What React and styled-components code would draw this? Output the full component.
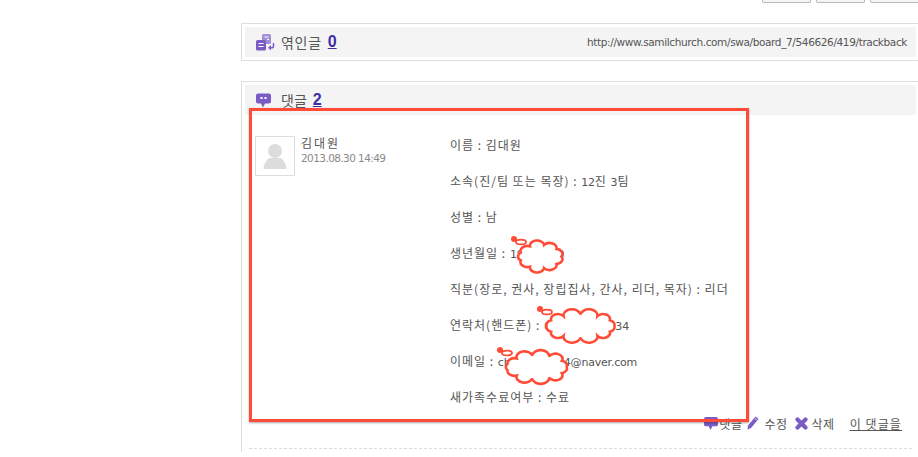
import React from "react";
import styled, { createGlobalStyle } from "styled-components";

const GlobalStyle = createGlobalStyle`
  html, body {
    margin: 0;
    padding: 0;
    background: #fff;
  }
  body {
    font-family: "Noto Sans CJK KR", "Liberation Sans", sans-serif;
  }
`;

const Page = styled.div`
  position: relative;
  width: 918px;
  height: 457px;
  overflow: hidden;
  padding-left: 241px;
  box-sizing: border-box;
`;

const TopButtons = styled.div`
  display: flex;
  justify-content: flex-end;
  gap: 5px;
  height: 3px;
  margin-right: -1px;
`;

const TopButton = styled.div`
  width: 49px;
  height: 3px;
  box-sizing: border-box;
  border: 1px solid #b9b9b9;
  border-top: 0;
  border-radius: 0 0 2px 2px;
  background: #f4f4f4;
`;

const Panel = styled.section`
  margin-top: 20px;
  border: 1px solid #dedede;
  border-right: 0;
  border-bottom: ${(p) => (p.$open ? "0" : "1px solid #dedede")};
  padding: 3px 2px 3px 3px;
`;

const PanelHead = styled.div`
  display: flex;
  align-items: center;
  height: 30px;
  padding: 0 9px 0 11px;
  background: #f4f4f4;
  color: #555;
  font-size: 14px;
`;

const HeadTitle = styled.span`
  letter-spacing: ${(p) => p.$spacing || 0}px;
`;

const HeadIcon = styled.svg`
  flex: none;
  width: ${(p) => p.$w}px;
  height: 17px;
  margin-right: ${(p) => p.$gap}px;
`;

const Count = styled.a`
  margin-left: 6px;
  color: #3c2fa6;
  font: bold 16px "Liberation Sans", sans-serif;
  text-decoration: underline;
`;

const TrackUrl = styled.span`
  margin-left: auto;
  color: #555;
  font: 10.5px "DejaVu Sans", sans-serif;
  letter-spacing: -0.37px;
`;

const Comment = styled.div`
  display: flex;
  padding: 21px 0 0 10px;
  height: 278px;
`;

const Avatar = styled.div`
  flex: none;
  width: 38px;
  height: 38px;
  border: 1px solid #ddd;
  display: flex;
  align-items: flex-end;
  justify-content: center;
`;

const Author = styled.div`
  flex: none;
  width: 155px;
  padding-left: 6px;
  box-sizing: border-box;
  margin-top: -1px;
`;

const AuthorName = styled.div`
  color: #555;
  font-size: 12px;
  line-height: 15px;
  letter-spacing: 1.9px;
`;

const AuthorDate = styled.div`
  margin-top: 1px;
  color: #888;
  font: 10.5px/15px "DejaVu Sans", sans-serif;
  letter-spacing: -0.58px;
`;

const Body = styled.div`
  display: flex;
  flex-direction: column;
  gap: 18px;
  color: #555;
  font-size: 12px;
  letter-spacing: 1px;
`;

const Line = styled.div`
  height: 18px;
  line-height: 18px;
  white-space: nowrap;
`;

const Latin = styled.span`
  font-family: "DejaVu Sans", sans-serif;
  font-size: 11px;
  letter-spacing: -0.2px;
  line-height: 1;
`;

const Actions = styled.div`
  display: flex;
  align-items: center;
  justify-content: flex-end;
  height: 18px;
  padding-right: 14px;
  color: #555;
  font-size: 12px;
  letter-spacing: 0.5px;
`;

const Action = styled.span`
  display: inline-flex;
  align-items: center;
  gap: ${(p) => p.$inner}px;
  margin-right: ${(p) => p.$gap}px;
`;

const ActionLink = styled.a`
  color: #555;
  text-decoration: underline;
  letter-spacing: 1.1px;
`;

const Divider = styled.div`
  margin: 16px 4px 0 4px;
  border-top: 1px dashed #ddd;
`;

const Highlight = styled.div`
  position: absolute;
  left: 249px;
  top: 108px;
  width: 500px;
  height: 314px;
  box-sizing: border-box;
  border: 3px solid #ff4b37;
  box-shadow: 0 1px 2px rgba(0, 0, 0, 0.35);
`;

const CloudMark = styled.svg`
  position: absolute;
  left: ${(p) => p.$x}px;
  top: ${(p) => p.$y}px;
  overflow: visible;
`;

// scalloped outline around an ellipse, for the hand-drawn redaction clouds
const cloudPath = (w, h, bumps) => {
  const pts = [];
  for (let i = 0; i < bumps; i++) {
    const a = (i / bumps) * Math.PI * 2;
    pts.push([w / 2 + (Math.cos(a) * w) / 2.15, h / 2 + (Math.sin(a) * h) / 2.8]);
  }
  let d = `M${pts[0][0].toFixed(1)} ${pts[0][1].toFixed(1)}`;
  for (let i = 1; i <= bumps; i++) {
    const p = pts[i % bumps];
    d += ` A7 5 0 0 1 ${p[0].toFixed(1)} ${p[1].toFixed(1)}`;
  }
  return d + "Z";
};

const Cloud = ({ x, y, w, h, bumps }) => (
  <CloudMark $x={x} $y={y} width={w} height={h}>
    <ellipse cx="3" cy="2" rx="5" ry="2.4" fill="#fff" stroke="#ff4b37" strokeWidth="1.8" />
    <circle cx="-4" cy="-1" r="3" fill="#ff4b37" />
    <path d={cloudPath(w, h, bumps)} fill="#fff" stroke="#ff4b37" strokeWidth="2.6" />
  </CloudMark>
);

const TrackbackIcon = () => (
  <HeadIcon $w={19} $gap={6} viewBox="0 0 19 17">
    <rect x="6" y="0" width="9" height="10" rx="1.5" fill="#a28fdb" />
    <rect x="0" y="6" width="10" height="10.500" rx="1.5" fill="#7a5cc4" />
    <path d="M2.500 9.500h5M2.500 12.500h5M8.500 3h4M11 5.500h2" stroke="#fff" strokeWidth="1" />
    <path d="M17.500 9v3a1.800 1.800 0 0 1-1.800 1.800H14" fill="none" stroke="#7a5cc4" strokeWidth="1.500" />
    <path d="M15 11l-3 2.800 3 2.800z" fill="#7a5cc4" />
  </HeadIcon>
);

const bubbleShape = (
  <>
    <path d="M2 0h11a2 2 0 0 1 2 2v6a2 2 0 0 1-2 2H9l-2 4-2-4H2a2 2 0 0 1-2-2V2a2 2 0 0 1 2-2z" fill="#7a5cc4" />
    <rect x="4.500" y="3.500" width="2" height="2" fill="#fff" />
    <rect x="8.500" y="3.500" width="2" height="2" fill="#fff" />
  </>
);

const PencilIcon = () => (
  <svg width="12" height="14" viewBox="0 0 12 14">
    <path d="M8.500 0.500l3 2.500-7.500 9L0.500 13.500l0.500-4z" fill="#7a5cc4" />
    <path d="M7.500 2l3 2.500" stroke="#d5ccf0" strokeWidth="1" />
  </svg>
);

const CrossIcon = () => (
  <svg width="13" height="13" viewBox="0 0 13 13">
    <path d="M2.500 2.500l8 8M10.500 2.500l-8 8" stroke="#7a5cc4" strokeWidth="4.200" strokeLinecap="round" />
  </svg>
);

const AvatarFigure = () => (
  <svg width="24" height="33" viewBox="0 0 24 33">
    <circle cx="12" cy="9" r="7" fill="#dcdcdc" />
    <path d="M0.500 27c0-5 3-9 6-11h11c3 2 6 6 6 11z" fill="#dcdcdc" />
  </svg>
);

const App = () => {
  return (
    <>
      <GlobalStyle />
      <Page>
        <TopButtons>
          <TopButton />
          <TopButton />
          <TopButton />
        </TopButtons>

        <Panel>
          <PanelHead>
            <TrackbackIcon />
            <HeadTitle $spacing={0.7}>엮인글</HeadTitle>
            <Count href="#">0</Count>
            <TrackUrl>http://www.samilchurch.com/swa/board_7/546626/419/trackback</TrackUrl>
          </PanelHead>
        </Panel>

        <Panel $open>
          <PanelHead>
            <HeadIcon $w={15} $gap={10} viewBox="0 0 15 14">
              {bubbleShape}
            </HeadIcon>
            <HeadTitle>댓글</HeadTitle>
            <Count href="#">2</Count>
          </PanelHead>

          <Comment>
            <Avatar>
              <AvatarFigure />
            </Avatar>
            <Author>
              <AuthorName>김대원</AuthorName>
              <AuthorDate>2013.08.30 14:49</AuthorDate>
            </Author>
            <Body>
              <Line>이름 : 김대원</Line>
              <Line>소속(진/팀 또는 목장) : <Latin>12</Latin>진 <Latin>3</Latin>팀</Line>
              <Line>성별 : 남</Line>
              <Line>생년월일 : <Latin>19000000</Latin></Line>
              <Line>직분(장로, 권사, 장립집사, 간사, 리더, 목자) : 리더</Line>
              <Line>연락처(핸드폰) : <Latin>00000.0000034</Latin></Line>
              <Line>이메일 : <Latin>chxxxxxxxxi4@naver.com</Latin></Line>
              <Line>새가족수료여부 : 수료</Line>
            </Body>
          </Comment>

          <Actions>
            <Action $gap={5} $inner={1}>
              <svg width="14" height="13" viewBox="0 0 15 14">{bubbleShape}</svg>
              댓글
            </Action>
            <Action $gap={7} $inner={5}><PencilIcon />수정</Action>
            <Action $gap={15} $inner={4}><CrossIcon />삭제</Action>
            <ActionLink href="#">이 댓글을</ActionLink>
          </Actions>
          <Divider />
        </Panel>

        <Highlight />
        <Cloud x={518} y={240} w={45} h={33} bumps={9} />
        <Cloud x={544} y={310} w={73} h={32} bumps={12} />
        <Cloud x={504} y={351} w={65} h={32} bumps={11} />
      </Page>
    </>
  );
};

export default App;
